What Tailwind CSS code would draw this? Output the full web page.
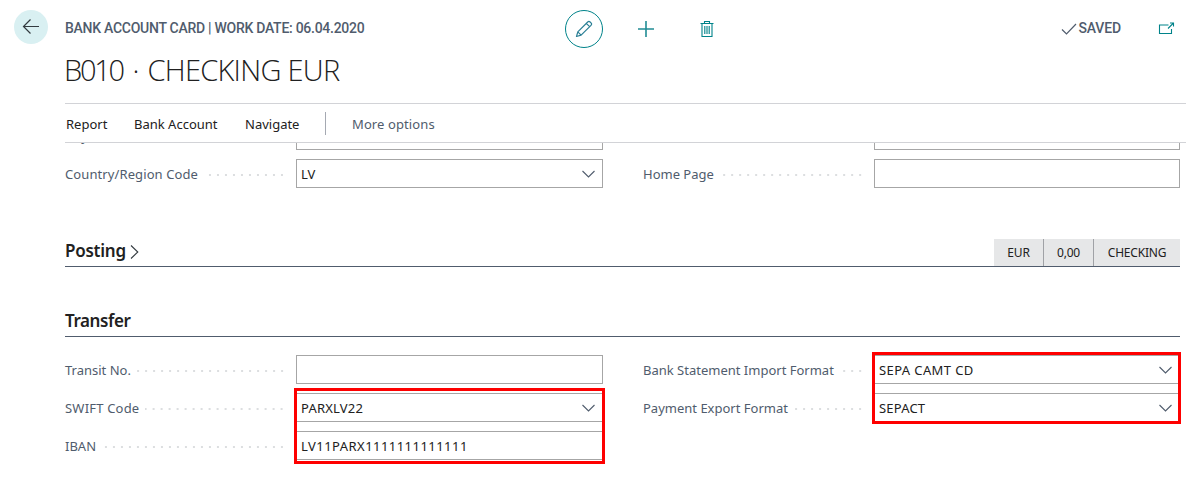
<!DOCTYPE html>
<html lang="en">
<head>
<meta charset="utf-8">
<title>Bank Account Card</title>
<script src="https://cdn.jsdelivr.net/npm/@tailwindcss/browser@4"></script>
</head>
<body class="relative h-[492px] w-[1186px] overflow-hidden bg-white font-['Noto_Sans',sans-serif] text-[13px] leading-[20px] text-[#212121]">

<header class="flex h-[103px] pl-[14px]">
  <div class="mt-[10px] flex size-[34px] shrink-0 items-center justify-center rounded-full bg-[#d9f0f2]">
    <svg class="size-[18px]" viewBox="0 0 18 18" fill="none" stroke="#333b40" stroke-width="1.2"><path d="M17 8.5H1.5M8.5 1.5l-7 7 7 7"/></svg>
  </div>
  <div class="ml-[17px] flex w-[500px] shrink-0 flex-col">
    <div class="mt-[18px] font-['Roboto',sans-serif] text-[14px] font-medium tracking-[-0.27px] text-[#505c6d]">BANK ACCOUNT CARD | WORK DATE: 06.04.2020</div>
    <h1 class="mt-[12px] -ml-px font-['Open_Sans',sans-serif] text-[29px] leading-[40px] font-light tracking-[-0.72px] whitespace-nowrap"><span class="tracking-[-2.3px]">B010</span><span class="ml-[3px]"> · </span><span class="ml-[2px]">CHECKING EUR</span></h1>
  </div>
  <div class="mt-[10px] flex h-[38px] items-center">
    <div class="flex size-[38px] items-center justify-center rounded-full border border-[#00838a]">
      <svg class="size-[18px]" viewBox="0 0 18 18" fill="none" stroke="#2a7f95" stroke-width="1.2" stroke-linejoin="round"><path d="M1.5 16.5l1.3-4.6L12.7 2a1.7 1.7 0 0 1 2.4 0l.9.9a1.7 1.7 0 0 1 0 2.4L6.1 15.2zM2.8 11.9l3.3 3.3M11.3 3.4l3.3 3.3"/></svg>
    </div>
    <svg class="ml-[35px] size-[16px]" viewBox="0 0 16 16" fill="none" stroke="#218c94" stroke-width="1.6"><path d="M8 0v16M0 8h16"/></svg>
    <svg class="ml-[46px] h-[16px] w-[14px]" viewBox="0 0 14 16" fill="none" stroke="#00838a" stroke-width="1.1"><path d="M.5 2.5h13M4.5 2.5v-2h5v2M2 2.5v13h10v-13M4.8 5v8M7 5v8M9.2 5v8"/></svg>
  </div>
  <div class="mt-[18px] ml-auto flex h-[20px] items-center">
    <svg class="mt-[2px] h-[12px] w-[16px]" viewBox="0 0 16 12" fill="none" stroke="#505c6d" stroke-width="1.2"><path d="M1 6.5l4.5 4.5L15 1"/></svg>
    <span class="ml-[1px] font-['Roboto',sans-serif] text-[14px] font-medium tracking-[-0.15px] text-[#505c6d]">SAVED</span>
    <svg class="mr-[11px] ml-[37px] h-[13px] w-[17px]" viewBox="0 0 17 13" fill="none" stroke="#00838a" stroke-width="1.1"><path d="M10.5 3H1.5v8.5h12V7M10 6.5L15.5 1M12 1h3.5v3.5"/></svg>
  </div>
</header>

<nav class="ml-[65px] flex h-[40px] items-center border-y border-[#d2d3d7] pb-px">
  <span class="ml-px w-[68px] pt-[3px]">Report</span>
  <span class="w-[111px] pt-[3px]">Bank Account</span>
  <span class="w-[80px] pt-[3px]">Navigate</span>
  <span class="mt-[1px] h-[23px] w-px bg-[#a5a9b2]"></span>
  <span class="ml-[26px] pt-[3px] tracking-[0.1px] text-[#505c6d]">More options</span>
</nav>

<main class="ml-[65px] w-[1115px] text-[#505c6d]">
  <!-- Address fields, scrolled partly under the command bar -->
  <section class="grid h-[45px] grid-cols-[538px_537px] content-end gap-x-[40px] gap-y-[9px] overflow-hidden">
    <div class="flex h-[29px] items-center"><span class="w-[219px]">City</span><span class="ml-auto h-[29px] w-[307px] border border-[#a6a6a6]"></span></div>
    <div class="flex h-[29px] items-center"><span class="ml-auto h-[29px] w-[306px] border border-[#a6a6a6]"></span></div>
    <div class="flex h-[29px] items-center">
      <div class="flex w-[219px] items-center"><span class="whitespace-nowrap tracking-[0.1px]">Country/Region Code</span><span class="mt-[2px] ml-2 h-[2px] flex-1 bg-[linear-gradient(to_right,#dcdee0_2px,transparent_2px)] bg-[size:8px_2px] bg-[position:right_3px_top]"></span></div>
      <div class="ml-auto flex h-[29px] w-[307px] items-center justify-between border border-[#a6a6a6] pr-[7px] pl-[4px] text-[#212121]"><span>LV</span><svg class="h-[8px] w-[13px]" viewBox="0 0 13 8" fill="none" stroke="#505c6d" stroke-width="1.1"><path d="M.5 1l6 6 6-6"/></svg></div>
    </div>
    <div class="flex h-[29px] items-center">
      <div class="flex w-[219px] items-center"><span class="whitespace-nowrap">Home Page</span><span class="mt-[2px] ml-2 h-[2px] flex-1 bg-[linear-gradient(to_right,#dcdee0_2px,transparent_2px)] bg-[size:8px_2px] bg-[position:right_3px_top]"></span></div>
      <div class="ml-auto h-[29px] w-[306px] border border-[#a6a6a6]"></div>
    </div>
  </section>

  <section class="mt-[51px] flex h-[28px] items-start border-b border-[#505c6d]">
    <h2 class="-mt-[1px] text-[17px] leading-[26px] font-semibold tracking-[-0.25px] text-[#212121]">Posting</h2>
    <svg class="mt-[6px] ml-[4px] h-[14px] w-[9px]" viewBox="0 0 9 14" fill="none" stroke="#333b40" stroke-width="1.1"><path d="M1 .5L7.8 7 1 13.5"/></svg>
    <div class="ml-auto flex h-[27px] divide-x divide-[#a0a2a6] bg-[#e6e7e8] text-[12px] leading-[28px] tracking-[-0.2px] text-[#212121]">
      <span class="w-[50px] text-center">EUR</span><span class="w-[50px] text-center">0,00</span><span class="w-[86px] text-center">CHECKING</span>
    </div>
  </section>

  <section>
    <h2 class="mt-[41px] h-[29px] border-b border-[#505c6d] text-[17px] leading-[26px] font-semibold tracking-[-0.4px] text-[#212121]">Transfer</h2>
    <div class="mt-[18px] grid grid-cols-[538px_537px] gap-x-[40px] gap-y-[9px]">
      <div class="flex h-[29px] items-center">
        <div class="flex w-[219px] items-center"><span class="whitespace-nowrap">Transit No.</span><span class="mt-[2px] ml-[6px] h-[2px] flex-1 bg-[linear-gradient(to_right,#dcdee0_2px,transparent_2px)] bg-[size:8px_2px] bg-[position:right_3px_top]"></span></div>
        <div class="ml-auto h-[29px] w-[307px] border border-[#a6a6a6]"></div>
      </div>
      <div class="flex h-[29px] items-center">
        <div class="flex w-[219px] items-center"><span class="whitespace-nowrap">Bank Statement Import Format</span><span class="mt-[2px] ml-[7px] h-[2px] flex-1 bg-[linear-gradient(to_right,#dcdee0_2px,transparent_2px)] bg-[size:8px_2px] bg-[position:right_3px_top]"></span></div>
        <div class="ml-auto flex h-[29px] w-[306px] items-center justify-between border border-[#a6a6a6] pr-[7px] pl-[4px] text-[#212121]"><span class="tracking-[0.4px]">SEPA CAMT CD</span><svg class="h-[8px] w-[13px]" viewBox="0 0 13 8" fill="none" stroke="#505c6d" stroke-width="1.1"><path d="M.5 1l6 6 6-6"/></svg></div>
      </div>
      <div class="flex h-[29px] items-center">
        <div class="flex w-[219px] items-center"><span class="whitespace-nowrap tracking-[0.2px]">SWIFT Code</span><span class="mt-[2px] ml-[6px] h-[2px] flex-1 bg-[linear-gradient(to_right,#dcdee0_2px,transparent_2px)] bg-[size:8px_2px] bg-[position:right_3px_top]"></span></div>
        <div class="ml-auto flex h-[29px] w-[307px] items-center justify-between border border-[#a6a6a6] pr-[7px] pl-[4px] text-[#212121]"><span class="tracking-[0.2px]">PARXLV22</span><svg class="h-[8px] w-[13px]" viewBox="0 0 13 8" fill="none" stroke="#505c6d" stroke-width="1.1"><path d="M.5 1l6 6 6-6"/></svg></div>
      </div>
      <div class="flex h-[29px] items-center">
        <div class="flex w-[219px] items-center"><span class="whitespace-nowrap">Payment Export Format</span><span class="mt-[2px] ml-[6px] h-[2px] flex-1 bg-[linear-gradient(to_right,#dcdee0_2px,transparent_2px)] bg-[size:8px_2px] bg-[position:right_3px_top]"></span></div>
        <div class="ml-auto flex h-[29px] w-[306px] items-center justify-between border border-[#a6a6a6] pr-[7px] pl-[4px] text-[#212121]"><span class="tracking-[0.2px]">SEPACT</span><svg class="h-[8px] w-[13px]" viewBox="0 0 13 8" fill="none" stroke="#505c6d" stroke-width="1.1"><path d="M.5 1l6 6 6-6"/></svg></div>
      </div>
      <div class="flex h-[29px] items-center">
        <div class="flex w-[219px] items-center"><span class="whitespace-nowrap">IBAN</span><span class="mt-[2px] ml-2 h-[2px] flex-1 bg-[linear-gradient(to_right,#dcdee0_2px,transparent_2px)] bg-[size:8px_2px] bg-[position:right_3px_top]"></span></div>
        <div class="ml-auto flex h-[29px] w-[307px] items-center border border-[#a6a6a6] pl-[4px] text-[#212121]"><span class="tracking-[0.46px]">LV11PARX1111111111111</span></div>
      </div>
    </div>
  </section>
</main>

<!-- Highlight frames over the fields -->
<div class="absolute top-[388px] left-[294px] h-[76px] w-[311px] border-3 border-[#fe0000]"></div>
<div class="absolute top-[352px] left-[872px] h-[72px] w-[309px] border-3 border-[#fe0000]"></div>
</body>
</html>
